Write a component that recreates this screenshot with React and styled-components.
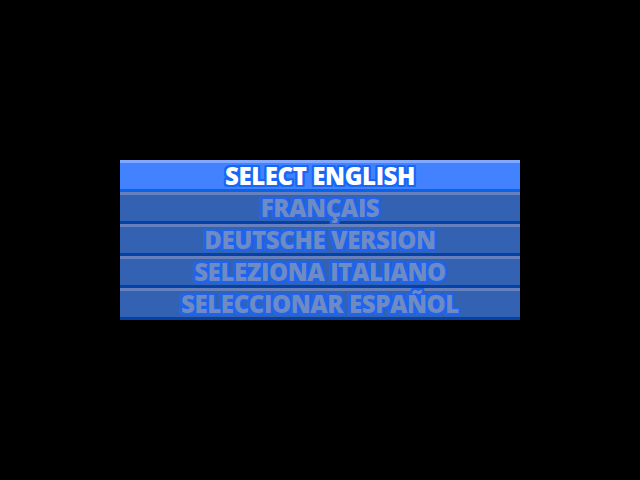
import React, { useState } from "react";
import styled, { createGlobalStyle } from "styled-components";

const GlobalStyle = createGlobalStyle`
  html, body {
    margin: 0;
    padding: 0;
    background: #000;
    width: 100%;
    height: 100%;
  }
  #root {
    height: 100%;
  }
`;

const Screen = styled.div`
  width: 640px;
  height: 480px;
  display: flex;
  align-items: center;
  justify-content: center;
  background: #000;
`;

const Menu = styled.ul`
  list-style: none;
  margin: 0;
  padding: 0;
  width: 400px;
  display: flex;
  flex-direction: column;
`;

const outline = (c) => `
  -2px -2px 0 ${c}, 0 -2px 0 ${c}, 2px -2px 0 ${c},
  -2px 0 0 ${c}, 2px 0 0 ${c},
  -2px 2px 0 ${c}, 0 2px 0 ${c}, 2px 2px 0 ${c},
  -1px -2px 0 ${c}, 1px -2px 0 ${c}, -1px 2px 0 ${c}, 1px 2px 0 ${c},
  -2px -1px 0 ${c}, 2px -1px 0 ${c}, -2px 1px 0 ${c}, 2px 1px 0 ${c}
`;

const Item = styled.li`
  box-sizing: content-box;
  height: 26px;
  border-top: 3px solid ${(p) => (p.$active ? "#82a8ff" : "#6580bc")};
  border-bottom: 3px solid ${(p) => (p.$active ? "#0a62e6" : "#0442a8")};
  background: ${(p) => (p.$active ? "#4282ff" : "#3462b2")};
  display: flex;
  align-items: center;
  justify-content: center;
  font-family: "Open Sans", "DejaVu Sans", sans-serif;
  font-weight: 800;
  font-size: 24px;
  letter-spacing: -0.4px;
  line-height: 26px;
  overflow: visible;
  color: ${(p) => (p.$active ? "#ffffff" : "#6f8bc4")};
  text-shadow: ${(p) => outline(p.$active ? "#1868f6" : "#1e64ee")};
  cursor: pointer;
  user-select: none;
`;

const languages = [
  "SELECT ENGLISH",
  "FRANÇAIS",
  "DEUTSCHE VERSION",
  "SELEZIONA ITALIANO",
  "SELECCIONAR ESPAÑOL",
];

export default function App() {
  const [active, setActive] = useState(0);
  return (
    <>
      <GlobalStyle />
      <Screen>
        <Menu>
          {languages.map((l, i) => (
            <Item key={l} $active={i === active} onMouseEnter={() => setActive(i)}>
              {l}
            </Item>
          ))}
        </Menu>
      </Screen>
    </>
  );
}
